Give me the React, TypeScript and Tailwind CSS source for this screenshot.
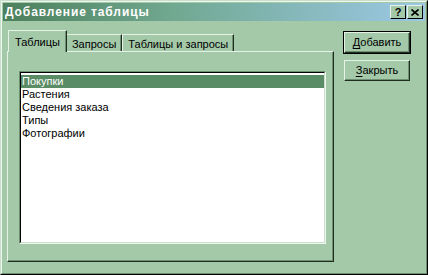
const items = ["Покупки", "Растения", "Сведения заказа", "Типы", "Фотографии"];

function Tab({ label, active }: { label: string; active?: boolean }) {
  if (active) {
    return (
      <div className="relative z-10 -mr-[1px] flex h-[22px] items-start border-l border-t border-l-[#e6f2e6] border-t-[#e6f2e6] border-r border-r-[#1e2e20] bg-[#a4c9a9] px-[6px] pt-[3px] shadow-[inset_-1px_0_0_#6e8f72]">
        {label}
      </div>
    );
  }
  return (
    <div className="mt-[4px] flex h-[17px] items-start border-l border-t border-l-[#e6f2e6] border-t-[#e6f2e6] border-r border-r-[#1e2e20] bg-[#a4c9a9] px-[5px] pt-[1px] shadow-[inset_-1px_0_0_#6e8f72]">
      {label}
    </div>
  );
}

function Btn({ first, rest, isDefault }: { first: string; rest: string; isDefault?: boolean }) {
  return (
    <div className={isDefault ? "border border-black" : "border border-transparent"}>
      <div className="flex h-[21px] w-[66px] items-center justify-center border border-t-[#e6f2e6] border-l-[#e6f2e6] border-r-[#1e2e20] border-b-[#1e2e20] bg-[#a4c9a9] shadow-[inset_-1px_-1px_0_#6e8f72]">
        <span>
          <span className="underline underline-offset-2">{first}</span>
          {rest}
        </span>
      </div>
    </div>
  );
}

export default function App() {
  return (
    <div
      className="h-[275px] w-[428px] overflow-hidden bg-[#a4c9a9] text-[11px] text-black"
      style={{ fontFamily: '"Liberation Sans", Arial, sans-serif' }}
    >
      <div className="h-full border border-t-[#c9dfcb] border-l-[#c9dfcb] border-r-black border-b-black">
        <div className="flex h-full flex-col border border-t-[#eef7ee] border-l-[#eef7ee] border-r-[#6e8f72] border-b-[#6e8f72] p-[1px]">
          <div className="flex h-[18px] items-center justify-between bg-gradient-to-r from-[#4c7f5c] via-[#70a890] via-40% to-[#9cc8e6] pl-[2px] pr-[2px]">
            <span className="text-[12px] font-bold tracking-[0.9px] text-white">Добавление таблицы</span>
            <div className="flex">
              <div className="flex h-[14px] w-[16px] items-center justify-center border border-t-[#e6f2e6] border-l-[#e6f2e6] border-r-black border-b-black bg-[#a4c9a9] text-[11px] font-bold leading-none">
                ?
              </div>
              <div className="ml-[1px] flex h-[14px] w-[16px] items-center justify-center border border-t-[#e6f2e6] border-l-[#e6f2e6] border-r-black border-b-black bg-[#a4c9a9]">
                <svg width="8" height="7" viewBox="0 0 8 7">
                  <path d="M0.5 0.5 L7.5 6.5 M7.5 0.5 L0.5 6.5" stroke="black" strokeWidth="1.6" />
                </svg>
              </div>
            </div>
          </div>

          <div className="flex pl-[4px] pt-[9px]">
            <div className="flex w-[327px] flex-col">
              <div className="flex pl-[1px]">
                <Tab label="Таблицы" active />
                <Tab label="Запросы" />
                <Tab label="Таблицы и запросы" />
              </div>
              <div className="-mt-[1px] flex h-[211px] flex-col border border-t-[#e6f2e6] border-l-[#e6f2e6] border-r-[#1e2e20] border-b-[#1e2e20] pb-[17px] pl-[11px] pr-[7px] pt-[19px] shadow-[inset_-1px_-1px_0_#6e8f72]">
                <div className="flex-1 border border-t-[#6e8f72] border-l-[#6e8f72] border-r-[#eef7ee] border-b-[#eef7ee]">
                  <div className="h-full border border-t-black border-l-black border-r-[#c9dfcb] border-b-[#c9dfcb] bg-white pt-[2px]">
                    {items.map((it, i) => (
                      <div
                        key={it}
                        className={
                          i === 0
                            ? "h-[13px] bg-[#5a8c66] pl-[1px] leading-[13px] text-white"
                            : "h-[13px] pl-[1px] leading-[13px]"
                        }
                      >
                        {it}
                      </div>
                    ))}
                  </div>
                </div>
              </div>
            </div>
            <div className="ml-[9px] flex flex-col gap-[5px] pt-[1px]">
              <Btn first="Д" rest="обавить" isDefault />
              <Btn first="З" rest="акрыть" />
            </div>
          </div>
        </div>
      </div>
    </div>
  );
}
